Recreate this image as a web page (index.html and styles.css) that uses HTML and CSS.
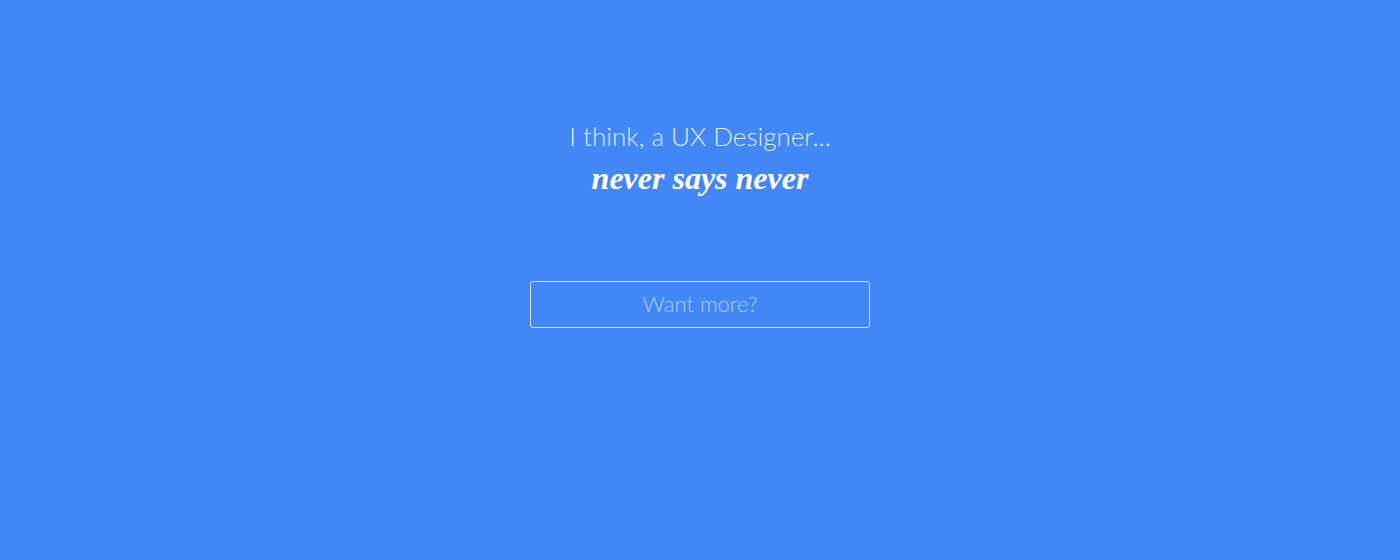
FILE: index.html
```html
<!DOCTYPE html>
<html>
<head>
<meta charset="utf-8">
<link rel="stylesheet" href="styles.css">
</head>
<body>
<main class="hero">
  <p class="intro">I think, a UX Designer...</p>
  <h1 class="motto">never says never</h1>
  <a class="more" href="#">Want more?</a>
</main>
</body>
</html>
```
FILE: styles.css
```css
html, body {
  margin: 0;
  padding: 0;
  height: 100%;
}
body {
  background: #4287f5;
  font-family: Lato, "Open Sans", sans-serif;
}
.hero {
  display: flex;
  flex-direction: column;
  align-items: center;
  padding-top: 116px;
}
.intro {
  margin: 0;
  font-size: 26px;
  font-weight: 300;
  line-height: 40px;
  color: rgba(255, 255, 255, 0.85);
}
.motto {
  margin: 0;
  font-family: "Liberation Serif", serif;
  font-style: italic;
  font-weight: 700;
  font-size: 32px;
  line-height: 44px;
  color: #fff;
}
.more {
  margin-top: 81px;
  box-sizing: border-box;
  width: 340px;
  height: 47px;
  display: flex;
  align-items: center;
  justify-content: center;
  padding-bottom: 3px;
  border: 1px solid rgba(255, 255, 255, 0.8);
  border-radius: 3px;
  color: rgba(255, 255, 255, 0.6);
  font-size: 22px;
  font-weight: 300;
  text-decoration: none;
}
```
